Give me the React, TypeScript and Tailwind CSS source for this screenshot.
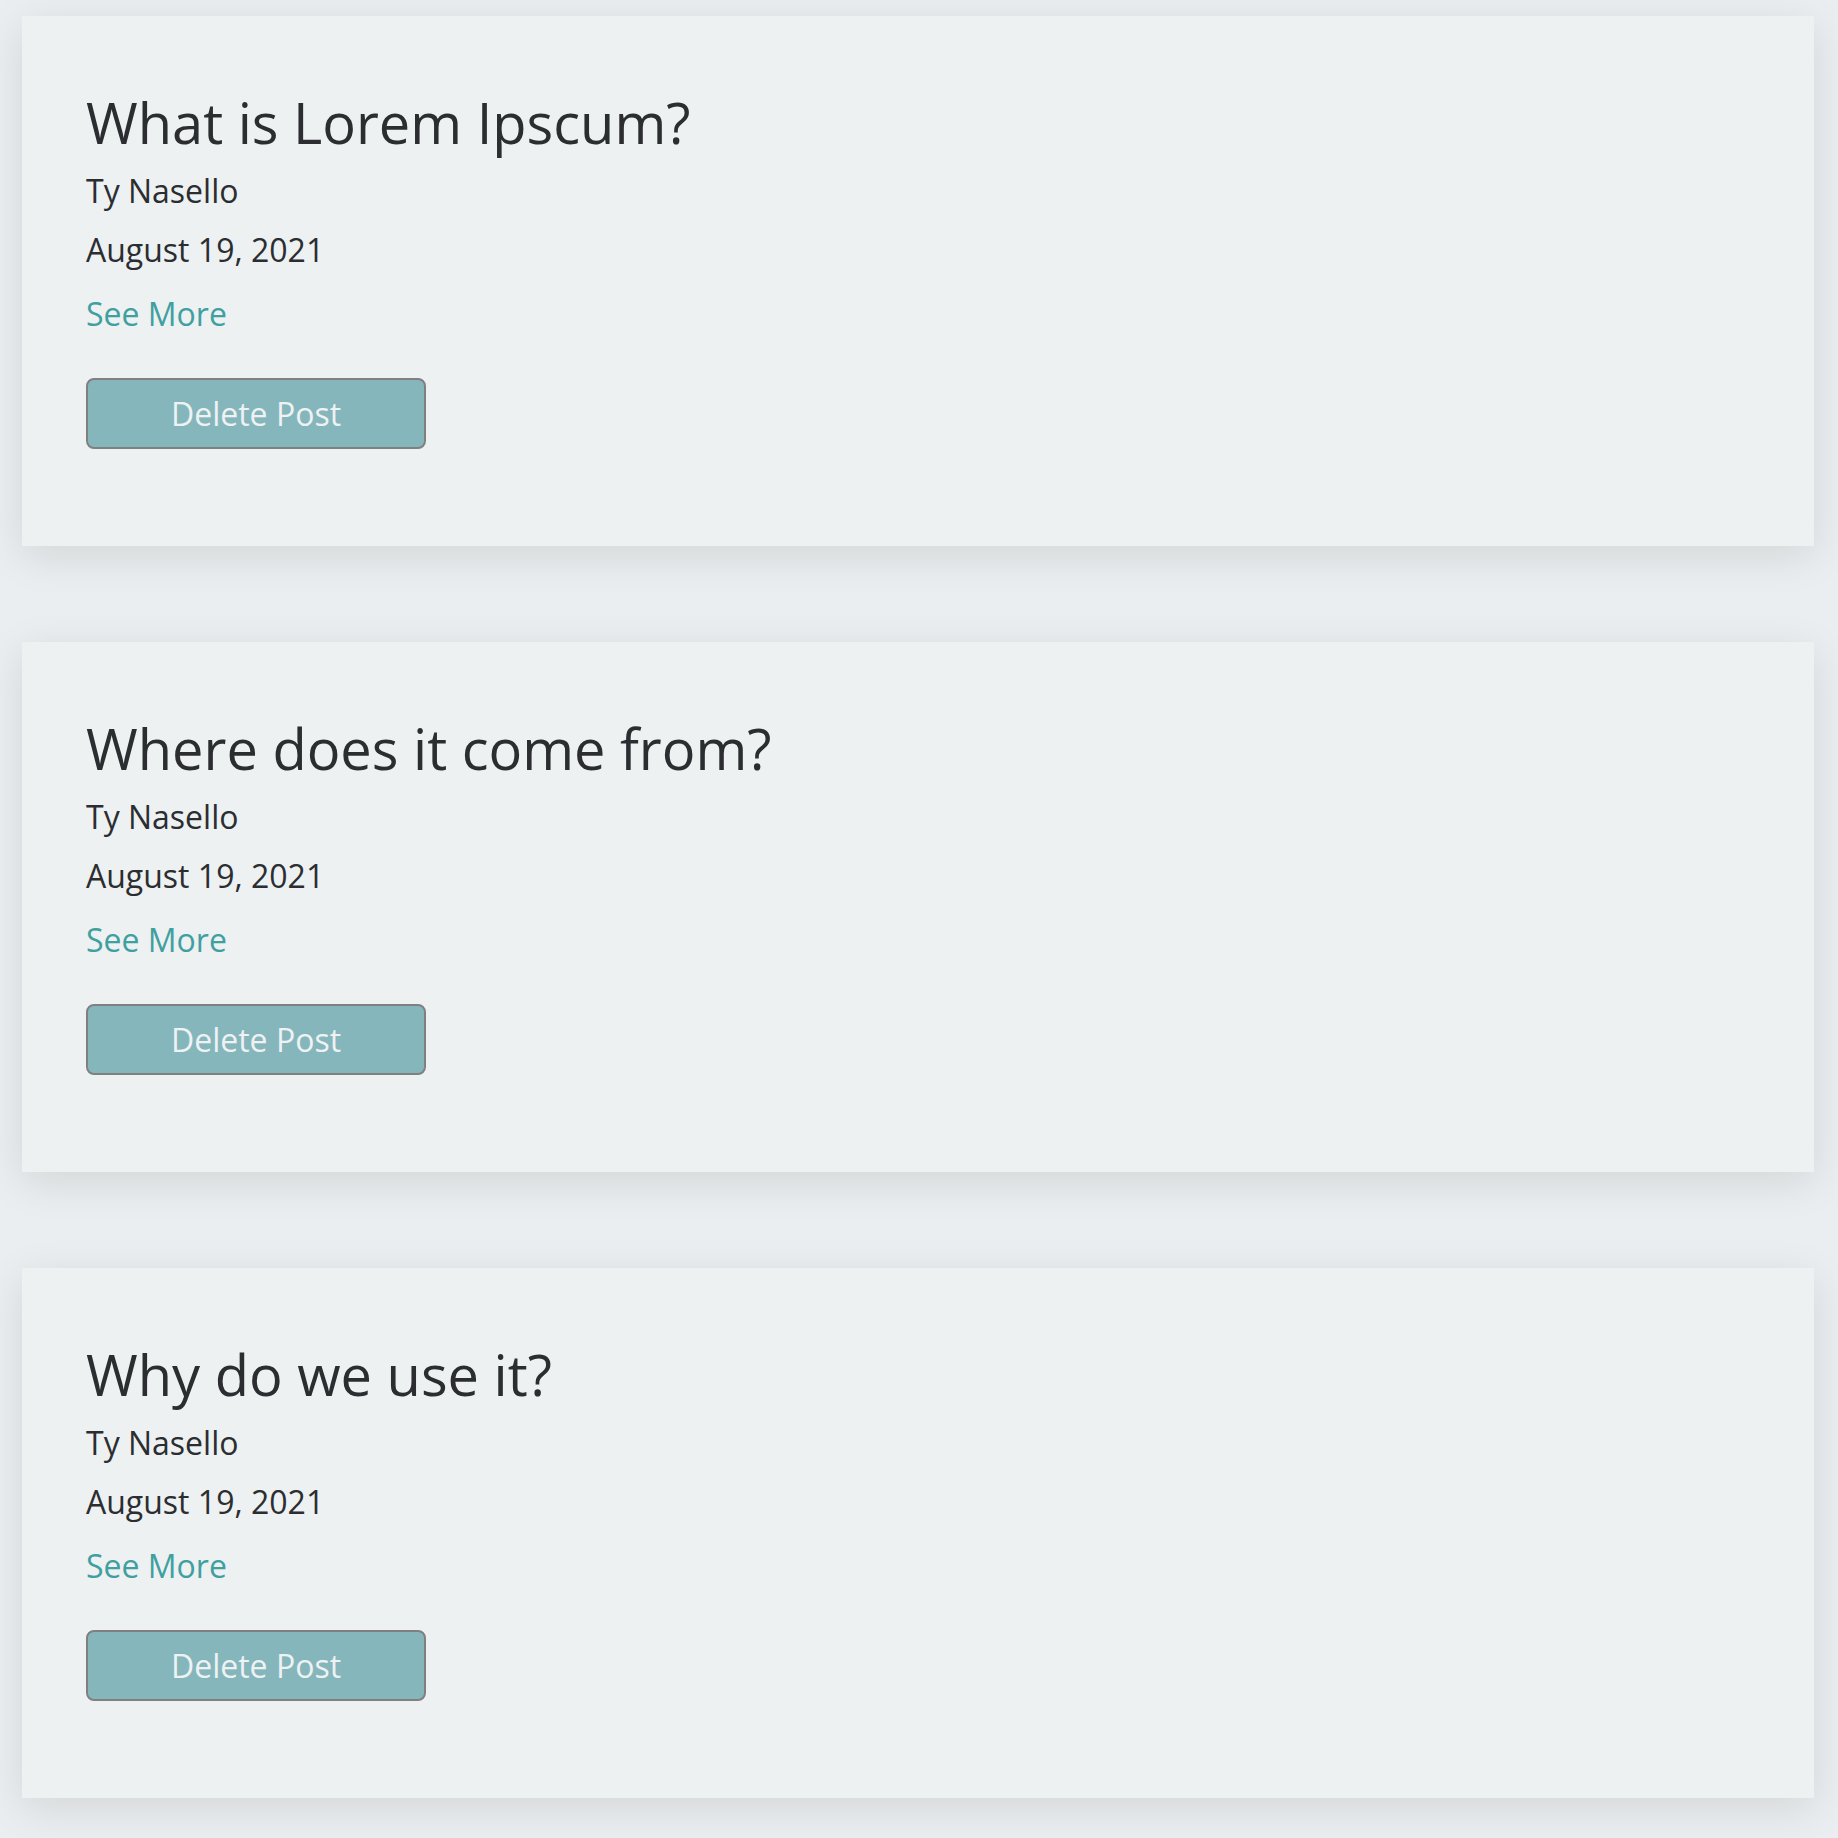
import React from "react";

const posts = [
  { title: "What is Lorem Ipscum?", author: "Ty Nasello", date: "August 19, 2021" },
  { title: "Where does it come from?", author: "Ty Nasello", date: "August 19, 2021" },
  { title: "Why do we use it?", author: "Ty Nasello", date: "August 19, 2021" },
];

function PostCard({ title, author, date }: { title: string; author: string; date: string }) {
  return (
    <div className="flex h-[530px] flex-col items-start bg-[#edf1f2] pl-[64px] pt-[74px] shadow-[0_10px_40px_rgba(0,0,0,0.1)]">
      <h2 className="text-[56px] leading-[64px] font-normal text-[#2b2d31]">{title}</h2>
      <p className="mt-[13px] text-[32px] leading-[48px] text-[#2b2d31]">{author}</p>
      <p className="mt-[11px] text-[32px] leading-[48px] text-[#2b2d31]">{date}</p>
      <a href="#" className="mt-[16px] text-[32px] leading-[48px] text-[#40a0a0]">
        See More
      </a>
      <button className="mt-[40px] flex h-[71px] w-[340px] items-center justify-center rounded-[8px] border-2 border-[#808080] bg-[#85b6bc] text-[32px] leading-[48px] text-[#eef2f2]">
        Delete Post
      </button>
    </div>
  );
}

export default function App() {
  return (
    <div
      className="min-h-screen bg-[#ebeef0] pt-[16px] pb-[40px]"
      style={{ fontFamily: '"Open Sans", "Noto Sans", sans-serif' }}
    >
      <div className="ml-[22px] flex w-[1792px] flex-col gap-[96px]">
        {posts.map((p) => (
          <PostCard key={p.title} {...p} />
        ))}
      </div>
    </div>
  );
}
